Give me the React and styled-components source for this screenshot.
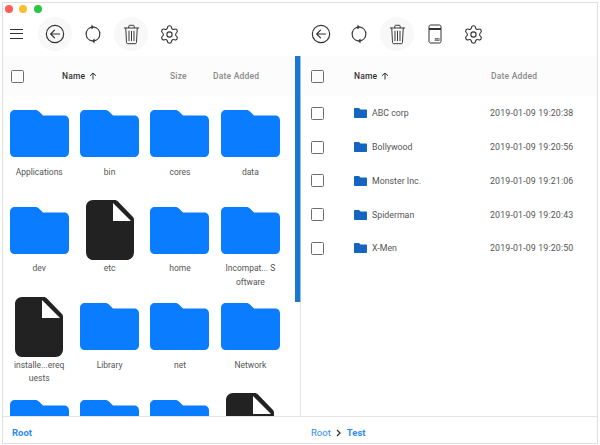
import React from "react";
import styled, { createGlobalStyle } from "styled-components";
import { Settings } from "lucide-react";

const GlobalStyle = createGlobalStyle`
  html, body { margin: 0; padding: 0; background: #fff; }
  body { font-family: Roboto, "Liberation Sans", sans-serif; }
`;

const Frame = styled.div`
  box-sizing: border-box;
  width: 600px;
  height: 445px;
  padding: 2px 2px 1px 2px;
`;
const Win = styled.div`
  box-sizing: border-box;
  width: 100%;
  height: 100%;
  border: 1px solid #dfdfdf;
  display: flex;
  flex-direction: column;
  background: #fff;
  overflow: hidden;
`;
const TitleBar = styled.div`
  box-sizing: border-box;
  display: flex;
  gap: 6.4px;
  padding: 2px 0 0 2px;
  height: 9px;
  flex-shrink: 0;
`;
const Light = styled.span`
  width: 8px;
  height: 8px;
  border-radius: 50%;
  background: ${(p) => p.$color};
`;
const Panes = styled.div`
  flex: 1;
  min-height: 0;
  display: grid;
  grid-template-columns: 297px 1fr;
`;
const Pane = styled.div`
  display: flex;
  flex-direction: column;
  min-width: 0;
  min-height: 0;
`;
const Toolbar = styled.div`
  height: 44px;
  flex-shrink: 0;
  padding: 0 0 0 ${(p) => p.$left}px;
  display: flex;
  align-items: center;
  gap: 4px;
`;
const Burger = styled.button`
  all: unset;
  width: 13px;
  height: 10px;
  margin: 0 11px 0 7px;
  border-top: 1.4px solid #333;
  border-bottom: 1.4px solid #333;
  position: relative;
  box-sizing: border-box;
  &::after {
    content: "";
    position: absolute;
    left: 0;
    right: 0;
    top: 3px;
    border-top: 1.4px solid #333;
  }
`;
const ToolButton = styled.button`
  all: unset;
  width: 34px;
  height: 34px;
  border-radius: 50%;
  display: flex;
  align-items: center;
  justify-content: center;
  background: ${(p) => (p.$active ? "#f8f8f8" : "transparent")};
  color: #333;
`;
const Body = styled.div`
  flex: 1;
  min-height: 0;
  display: flex;
`;
const Content = styled.div`
  flex: 1;
  min-width: 0;
  display: flex;
  flex-direction: column;
`;
const HeaderRow = styled.div`
  height: 40px;
  background: #fcfcfc;
  display: flex;
  align-items: center;
  font-size: 8.5px;
  color: #8a8a8a;
  font-weight: 500;
  letter-spacing: 0.2px;
  flex-shrink: 0;
`;
const Check = styled.span`
  box-sizing: border-box;
  width: 13px;
  height: 13px;
  border: 1.4px solid #6e6e6e;
  border-radius: 1.5px;
  flex-shrink: 0;
  margin-left: ${(p) => p.$left}px;
`;
const HeadCell = styled.span`
  margin-left: ${(p) => p.$left}px;
  width: ${(p) => p.$width}px;
  flex-shrink: 0;
  display: flex;
  align-items: center;
  gap: 4px;
  color: ${(p) => (p.$strong ? "#333" : "#8a8a8a")};
`;
const Scrollbar = styled.div`
  width: 5px;
  flex-shrink: 0;
  background: linear-gradient(#1976d2 0, #1976d2 246px, transparent 246px);
`;
const ScrollEdge = styled.div`
  width: 1px;
  flex-shrink: 0;
  background: linear-gradient(#8fc1ea 0, #8fc1ea 246px, #e4e4e4 246px);
`;
const Grid = styled.div`
  flex: 1;
  min-height: 0;
  overflow: hidden;
  display: grid;
  grid-template-columns: repeat(4, 70.4px);
  grid-auto-rows: 96.5px;
  padding: 7.5px 0 0 1px;
`;
const Tile = styled.div`
  display: flex;
  flex-direction: column;
  align-items: center;
  font-size: 8.5px;
  line-height: 13.5px;
  color: #555;
  text-align: center;
`;
const TileIcon = styled.div`
  height: 60px;
  flex-shrink: 0;
  display: flex;
  align-items: center;
  justify-content: center;
  margin-bottom: 2px;
`;
const TileLabel = styled.div`
  width: 54px;
  word-break: break-all;
`;
const Rows = styled.div`
  display: flex;
  flex-direction: column;
  padding-top: 0.5px;
`;
const Row = styled.div`
  height: 33.75px;
  display: flex;
  align-items: center;
  font-size: 8.8px;
  color: #555;
`;
const RowName = styled.span`
  margin-left: 30px;
  width: 136px;
  display: flex;
  align-items: center;
  gap: 5px;
  flex-shrink: 0;
`;
const RowDate = styled.span`
  letter-spacing: 0.15px;
`;
const Footer = styled.div`
  box-sizing: border-box;
  height: 27px;
  flex-shrink: 0;
  border-top: 1.2px solid #e4e4e4;
  display: flex;
  align-items: center;
  padding: 5px 0 0 ${(p) => p.$left}px;
  gap: 5px;
  font-size: 9.5px;
  color: #2b8cf0;
`;
const Crumb = styled.span`
  font-weight: ${(p) => (p.$current ? 700 : 400)};
`;

const Stroke = ({ size = 22, children, width = 1.4 }) => (
  <svg width={size} height={size} viewBox="0 0 24 24" fill="none" stroke="currentColor" strokeWidth={width} strokeLinecap="round" strokeLinejoin="round">
    {children}
  </svg>
);

const BackIcon = () => (
  <Stroke size={20}>
    <circle cx="12" cy="12" r="10.4" />
    <path d="M17.5 12H7M11.4 7.3 6.8 12l4.6 4.7" />
  </Stroke>
);
const SyncIcon = () => (
  <Stroke size={20}>
    <path d="M13.4 3.800A8.400 8.400 0 0 1 13.400 20.300M10.600 20.200A8.400 8.400 0 0 1 10.600 3.700" />
    <path d="M10.800 1.800 13 3.700 10.800 5.600zM13.200 18.400 11 20.300 13.200 22.200z" fill="currentColor" strokeWidth="0.8" />
  </Stroke>
);
const TrashIcon = () => (
  <Stroke size={23} width={1}>
    <path d="M4.500 5.200h15M9.200 5V3.200c0-.5.3-.8.8-.8h4c.5 0 .8.300.8.800V5M6 5.400l.8 15c.1.800.6 1.200 1.300 1.200h7.800c.7 0 1.200-.4 1.300-1.200l.8-15M9.400 8.500v10M12 8.500v10M14.600 8.500v10" />
  </Stroke>
);
const SdIcon = () => (
  <svg width="14" height="20" viewBox="0 0 14 20" fill="none" stroke="#333" strokeWidth="1">
    <path d="M2.500 1h9c.8 0 1.500.7 1.500 1.500v15c0 .8-.7 1.500-1.500 1.500h-9C1.700 19 1 18.300 1 17.500v-15C1 1.700 1.700 1 2.500 1z" />
    <path d="M1 5h12" strokeWidth="2" />
    <text x="6.500" y="17" fontSize="4" fontWeight="700" fill="#333" stroke="none" fontFamily="Roboto, sans-serif">SD</text>
  </svg>
);
const GearIcon = () => <Settings size={21} strokeWidth={1.25} />;
const SortArrow = () => (
  <svg width="8" height="8" viewBox="0 0 8 8" fill="none" stroke="#333" strokeWidth="1">
    <path d="M4 7.500V1M1 3.800 4 1l3 2.800" />
  </svg>
);
const FolderBig = () => (
  <svg width="59" height="47" viewBox="0 0 59 47">
    <path d="M5 0h20c2 0 3 .6 4.200 1.800L33 5.500h21c3 0 5 2 5 5V42c0 3-2 5-5 5H5c-3 0-5-2-5-5V5c0-3 2-5 5-5z" fill="#0a7cff" />
  </svg>
);
const DocBig = () => (
  <svg width="48" height="60" viewBox="0 0 48 60">
    <path d="M7 0h21.500c1.500 0 2.500.5 3.500 1.500l14.500 15c1 1 1.500 2 1.500 3.500V52c0 4.500-3 8-7.500 8H7c-4 0-7-3.500-7-8V7c0-4 3-7 7-7z" fill="#222" />
    <path d="M27 3v18h18z" fill="#fff" />
  </svg>
);
const FolderSmall = () => (
  <svg width="13" height="10" viewBox="0 0 13 10">
    <path d="M1 0h4l1.500 1.500H12c.6 0 1 .4 1 1V9c0 .6-.4 1-1 1H1c-.6 0-1-.4-1-1V1c0-.6.4-1 1-1z" fill="#1565c0" />
  </svg>
);

// the last row is cut by the footer, so it has no visible labels
const TILES = [
  { name: "Applications" }, { name: "bin" }, { name: "cores" }, { name: "data" },
  { name: "dev" }, { name: "etc", doc: true }, { name: "home" }, { name: "Incompat... Software" },
  { name: "installe...erequests", doc: true }, { name: "Library" }, { name: "net" }, { name: "Network" },
  {}, {}, {}, { doc: true },
];

const ROWS = [
  ["ABC corp", "2019-01-09 19:20:38"],
  ["Bollywood", "2019-01-09 19:20:56"],
  ["Monster Inc.", "2019-01-09 19:21:06"],
  ["Spiderman", "2019-01-09 19:20:43"],
  ["X-Men", "2019-01-09 19:20:50"],
];

export default function App() {
  return (
    <Frame>
      <GlobalStyle />
      <Win>
        <TitleBar>
          <Light $color="#fc5f57" />
          <Light $color="#fdbb2e" />
          <Light $color="#28c940" />
        </TitleBar>
        <Panes>
          <Pane>
            <Toolbar $left={0}>
              <Burger />
              <ToolButton $active><BackIcon /></ToolButton>
              <ToolButton><SyncIcon /></ToolButton>
              <ToolButton $active><TrashIcon /></ToolButton>
              <ToolButton><GearIcon /></ToolButton>
            </Toolbar>
            <Body>
              <Content>
                <HeaderRow>
                  <Check $left={8} />
                  <HeadCell $left={38} $width={108} $strong>Name <SortArrow /></HeadCell>
                  <HeadCell $left={0} $width={43}>Size</HeadCell>
                  <HeadCell $left={0} $width={50}>Date Added</HeadCell>
                </HeaderRow>
                <Grid>
                  {TILES.map((tile, i) => (
                    <Tile key={i}>
                      <TileIcon>{tile.doc ? <DocBig /> : <FolderBig />}</TileIcon>
                      {tile.name && <TileLabel>{tile.name}</TileLabel>}
                    </Tile>
                  ))}
                </Grid>
              </Content>
              <Scrollbar />
            </Body>
            <Footer $left={9}>
              <Crumb $current>Root</Crumb>
            </Footer>
          </Pane>
          <Pane>
            <Toolbar $left={4}>
              <ToolButton><BackIcon /></ToolButton>
              <ToolButton><SyncIcon /></ToolButton>
              <ToolButton $active><TrashIcon /></ToolButton>
              <ToolButton><SdIcon /></ToolButton>
              <ToolButton><GearIcon /></ToolButton>
            </Toolbar>
            <Body>
              <ScrollEdge />
              <Content>
                <HeaderRow>
                  <Check $left={10} />
                  <HeadCell $left={30} $width={137} $strong>Name <SortArrow /></HeadCell>
                  <HeadCell $left={0} $width={60}>Date Added</HeadCell>
                </HeaderRow>
                <Rows>
                  {ROWS.map(([name, date]) => (
                    <Row key={name}>
                      <Check $left={10} />
                      <RowName><FolderSmall />{name}</RowName>
                      <RowDate>{date}</RowDate>
                    </Row>
                  ))}
                </Rows>
              </Content>
            </Body>
            <Footer $left={11}>
              <Crumb>Root</Crumb>
              <svg width="6" height="8" viewBox="0 0 6 8" fill="none" stroke="#333" strokeWidth="1.3"><path d="M1 1l3 3-3 3" /></svg>
              <Crumb $current>Test</Crumb>
            </Footer>
          </Pane>
        </Panes>
      </Win>
    </Frame>
  );
}
